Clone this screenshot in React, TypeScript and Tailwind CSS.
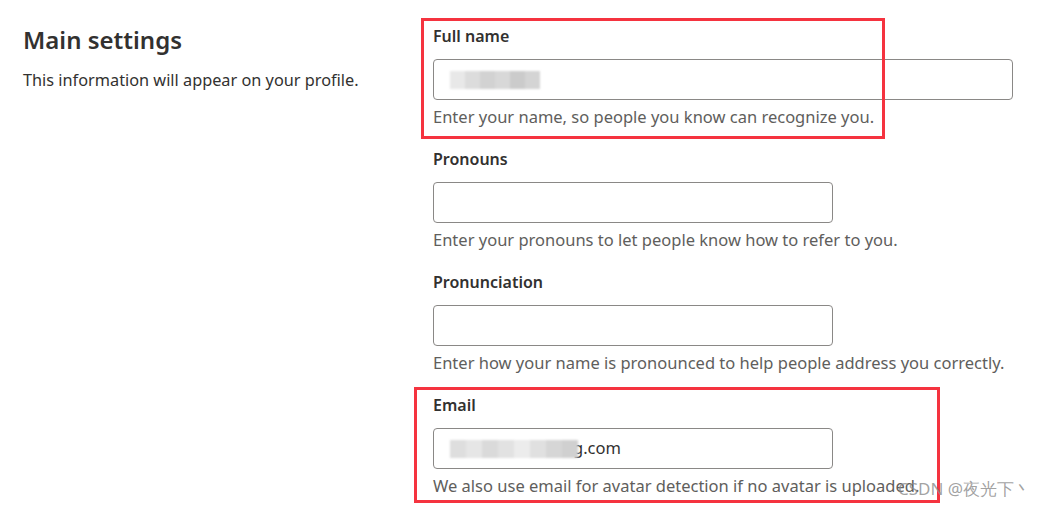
import React from 'react';

const Field = ({ label, help, wide, children }: { label: string; help: string; wide?: boolean; children?: React.ReactNode }) => (
  <div className="flex flex-col">
    <label className="h-6 leading-6 text-[16px] font-semibold text-[#323130]">{label}</label>
    <div
      className={`mt-[11px] h-[41px] rounded-[4px] border border-[#8a8886] bg-white flex items-center px-4 ${wide ? 'w-[580px]' : 'w-[400px]'}`}
    >
      {children}
    </div>
    <p className="mt-[5px] h-6 leading-6 text-[16.5px] text-[#605e5c] whitespace-nowrap">{help}</p>
  </div>
);

const Mosaic = ({ cells, cell = 'w-[15px]' }: { cells: string[]; cell?: string }) => (
  <div className="relative z-10 flex h-[18px] blur-[1px]">
    {cells.map((c, i) => (
      <div key={i} className={`h-full ${cell}`} style={{ background: c }} />
    ))}
  </div>
);

export default function App() {
  return (
    <div
      className="relative w-[1044px] h-[508px] bg-white overflow-hidden flex"
      style={{ fontFamily: '"Noto Sans", "Open Sans", sans-serif' }}
    >
      <div className="w-[433px] pl-[23px] pt-[24px] shrink-0">
        <h2 className="text-[24px] leading-8 font-semibold text-[#323130]">Main settings</h2>
        <p className="mt-[12px] text-[16.3px] leading-6 text-[#323130]">This information will appear on your profile.</p>
      </div>

      <div className="pt-6 flex flex-col gap-[18px]">
        <Field label="Full name" help="Enter your name, so people you know can recognize you." wide>
          <Mosaic cells={['#e8e8e8', '#dcdcdc', '#d2d2d2', '#d8d8d8', '#cbcbcb', '#d4d4d4']} />
        </Field>
        <Field label="Pronouns" help="Enter your pronouns to let people know how to refer to you." />
        <Field label="Pronunciation" help="Enter how your name is pronounced to help people address you correctly." />
        <Field label="Email" help="We also use email for avatar detection if no avatar is uploaded.">
          <div className="-mr-[5px] flex">
            <Mosaic cell="w-[16px]" cells={['#dedede', '#e6e6e6', '#dadada', '#e2e2e2', '#ececec', '#e0e0e0', '#d6d6d6', '#d0d0d0']} />
          </div>
          <span className="text-[16.5px] text-[#323130]">g.com</span>
        </Field>
      </div>

      <div className="absolute left-[421px] top-[18px] w-[464px] h-[121px] border-[3px] border-[#f5333f]" />
      <div className="absolute left-[414px] top-[387px] w-[526px] h-[116px] border-[3px] border-[#f5333f]" />

      <div className="absolute left-[898px] top-[477px] text-[17px] leading-6 text-[#8a8a8a]/80 whitespace-nowrap">
        CSDN @夜光下丶
      </div>
    </div>
  );
}
